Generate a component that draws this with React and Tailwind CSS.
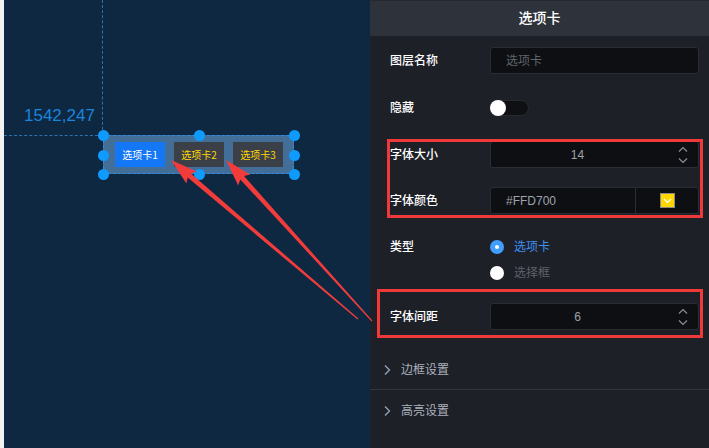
import React from 'react'

const font = { fontFamily: '"Liberation Sans", "Noto Sans CJK SC", sans-serif' }

const Arrow = ({ from, to }) => {
  const dx = to[0] - from[0]
  const dy = to[1] - from[1]
  const len = Math.hypot(dx, dy)
  const ux = dx / len
  const uy = dy / len
  const nx = -uy
  const ny = ux
  const headLen = 24
  const bx = to[0] - ux * headLen
  const by = to[1] - uy * headLen
  const p = (x, y) => `${x.toFixed(1)},${y.toFixed(1)}`
  const pts = [
    p(from[0] + nx * 0.6, from[1] + ny * 0.6),
    p(bx + nx * 2.5, by + ny * 2.5),
    p(bx - ux * 3 + nx * 8, by - uy * 3 + ny * 8),
    p(to[0], to[1]),
    p(bx - ux * 3 - nx * 8, by - uy * 3 - ny * 8),
    p(bx - nx * 2.5, by - ny * 2.5),
    p(from[0] - nx * 0.6, from[1] - ny * 0.6),
  ].join(' ')
  return <polygon points={pts} fill="#f23c3c" />
}

const Spinner = () => (
  <svg width="10" height="18" viewBox="0 0 10 18" className="absolute right-[10px] top-[4px]">
    <path d="M1 5.5 L5 1.5 L9 5.5" fill="none" stroke="#8c929c" strokeWidth="1.1" />
    <path d="M1 12.5 L5 16.5 L9 12.5" fill="none" stroke="#8c929c" strokeWidth="1.1" />
  </svg>
)

const Chevron = () => (
  <svg width="8" height="12" viewBox="0 0 8 12" className="mr-[10px]">
    <path d="M2 1.5 L6.5 6 L2 10.5" fill="none" stroke="#8fa6bf" strokeWidth="1.3" />
  </svg>
)

const Handle = ({ x, y }) => (
  <div
    className="absolute w-[11px] h-[11px] rounded-full bg-[#0f9bfd]"
    style={{ left: x - 5.5, top: y - 5.5 }}
  />
)

export default function App() {
  const handles = [
    [103, 135], [199, 135], [294, 135],
    [103, 155], [294, 155],
    [103, 174], [199, 174], [294, 174],
  ]

  return (
    <div className="relative flex w-[709px] h-[448px] overflow-hidden" style={font}>
      {/* left strip */}
      <div className="w-[4px] bg-[#f2f2f2]" />

      {/* canvas */}
      <div className="relative flex-1 bg-[#0e2841]">
        <div className="absolute left-[98px] top-0 h-[135px] border-l border-dashed border-[#2f72b0]" />
        <div className="absolute left-0 top-[135px] w-[99px] border-t border-dashed border-[#2f72b0]" />
        <div className="absolute left-[20px] top-[106px] text-[17px] leading-[20px] text-[#1b84dd]">1542,247</div>

        <div className="absolute left-[99px] top-[135px] w-[191px] h-[39px] bg-[#436e98] border border-dashed border-[#2f8be0] flex items-center gap-[9px] pl-[11px]">
          <div className="w-[50px] h-[25px] bg-[#1478f6] text-white text-[10px] flex items-center justify-center" style={{ fontFamily: '"Noto Sans CJK SC", sans-serif' }}>选项卡1</div>
          <div className="w-[50px] h-[25px] bg-[#3b3f48] text-[#ffd700] text-[10px] flex items-center justify-center" style={{ fontFamily: '"Noto Sans CJK SC", sans-serif' }}>选项卡2</div>
          <div className="w-[50px] h-[25px] bg-[#3b3f48] text-[#ffd700] text-[10px] flex items-center justify-center" style={{ fontFamily: '"Noto Sans CJK SC", sans-serif' }}>选项卡3</div>
        </div>
      </div>

      {/* handles over canvas */}
      {handles.map(([x, y]) => (
        <Handle key={`${x}-${y}`} x={x} y={y} />
      ))}

      {/* properties panel */}
      <div className="w-[339px] bg-[#1e2028] flex flex-col text-[12px] text-white">
        <div className="h-[36px] bg-[#2e323a] border-t border-[#25282e] flex items-center justify-center text-[14px] font-medium">选项卡</div>

        <div className="pl-[20px] pr-[10px]">
          <div className="mt-[11px] h-[27px] flex items-center">
            <div className="w-[100px] font-medium">图层名称</div>
            <div className="flex-1 h-full bg-[#0e0f13] border border-[#2a2d35] rounded-[3px] flex items-center pl-[15px] text-[#5f636b]">选项卡</div>
          </div>

          <div className="mt-[20px] h-[27px] flex items-center">
            <div className="w-[100px] font-medium">隐藏</div>
            <div className="relative w-[39px] h-[16px] rounded-full bg-[#0f1014] border border-[#262930]">
              <div className="absolute -left-px -top-px w-[16px] h-[16px] rounded-full bg-white" />
            </div>
          </div>

          <div className="mt-[20px] h-[27px] flex items-center">
            <div className="w-[100px] font-medium">字体大小</div>
            <div className="relative flex-1 h-full bg-[#0e0f13] border border-[#2a2d35] rounded-[3px] flex items-center pr-[34px] justify-center text-[#9ea2aa]">
              14
              <Spinner />
            </div>
          </div>

          <div className="mt-[19px] h-[27px] flex items-center">
            <div className="w-[100px] font-medium">字体颜色</div>
            <div className="flex-1 h-full bg-[#0e0f13] border border-[#2a2d35] rounded-[3px] flex items-center">
              <div className="w-[145px] h-full flex items-center pl-[15px] border-r border-[#2a2d35] text-[#9ea2aa]">#FFD700</div>
              <div className="flex-1 flex items-center justify-center">
                <div className="w-[15px] h-[15px] bg-[#ffd700] border border-[#8a8a8a] flex items-center justify-center">
                  <svg width="9" height="6" viewBox="0 0 9 6">
                    <path d="M1 1 L4.5 4.5 L8 1" fill="none" stroke="#fff" strokeWidth="1.2" />
                  </svg>
                </div>
              </div>
            </div>
          </div>

          <div className="mt-[20px] flex">
            <div className="w-[100px] h-[26px] flex items-center font-medium">类型</div>
            <div className="flex flex-col">
              <div className="h-[26px] flex items-center gap-[10px] text-[#3d8ff2]">
                <div className="w-[14px] h-[14px] rounded-full bg-[#409eff] flex items-center justify-center">
                  <div className="w-[4px] h-[4px] rounded-full bg-white" />
                </div>
                选项卡
              </div>
              <div className="h-[26px] flex items-center gap-[10px] text-[#5e6169]">
                <div className="w-[14px] h-[14px] rounded-full bg-white" />
                选择框
              </div>
            </div>
          </div>

          <div className="mt-[17px] h-[27px] flex items-center">
            <div className="w-[100px] font-medium">字体间距</div>
            <div className="relative flex-1 h-full bg-[#0e0f13] border border-[#2a2d35] rounded-[3px] flex items-center pr-[34px] justify-center text-[#9ea2aa]">
              6
              <Spinner />
            </div>
          </div>
        </div>

        <div className="mt-[20px] h-[40px] flex items-center pl-[13px] border-b border-[#33363e] text-[#aab1bc]">
          <Chevron />
          边框设置
        </div>
        <div className="h-[41px] flex items-center pl-[13px] text-[#aab1bc]">
          <Chevron />
          高亮设置
        </div>
      </div>

      {/* annotations */}
      <div className="absolute left-[387px] top-[139px] w-[316px] h-[79px] border-[3px] border-[#f03a3a] pointer-events-none" />
      <div className="absolute left-[377px] top-[289px] w-[326px] h-[49px] border-[3px] border-[#f03a3a] pointer-events-none" />
      <svg className="absolute left-0 top-0 pointer-events-none" width="709" height="448">
        <Arrow from={[358, 319]} to={[171, 160]} />
        <Arrow from={[372, 321]} to={[226, 160]} />
      </svg>
    </div>
  )
}
